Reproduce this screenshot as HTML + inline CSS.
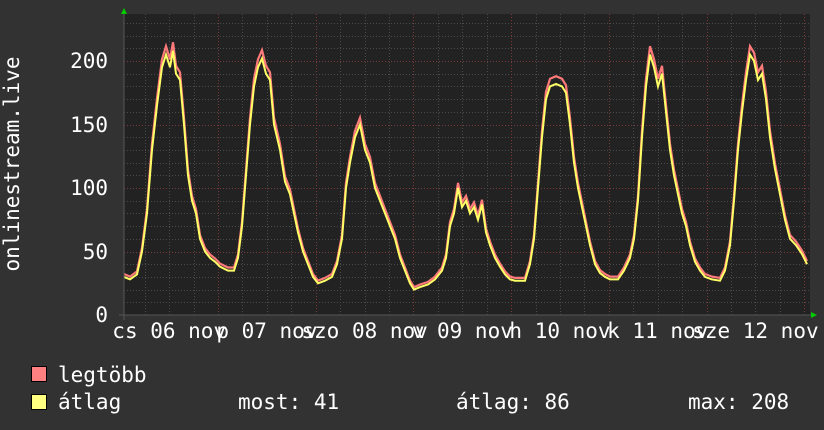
<!DOCTYPE html>
<html><head><meta charset="utf-8"><style>
html,body{margin:0;padding:0;background:#323232;}
svg{display:block}
text{font-family:"DejaVu Sans Mono","Liberation Mono",monospace;fill:#fff;font-size:21px}
</style></head><body>
<svg id="s" width="824" height="430" xmlns="http://www.w3.org/2000/svg">
<rect x="0" y="0" width="824" height="430" fill="#323232"/>
<rect x="124" y="14" width="686" height="301" fill="#222"/>
<g id="grid"></g>
<polyline id="red" fill="none" stroke="#ff7a7a" stroke-width="2.2"/>
<polyline id="yel" fill="none" stroke="#ffff66" stroke-width="2"/>
<line x1="124" y1="14" x2="124" y2="320" stroke="#555" stroke-width="1"/>
<line x1="119" y1="315" x2="812" y2="315" stroke="#555" stroke-width="1"/>
<polygon points="121,14 127,14 124,8" fill="#00cc00"/>
<polygon points="811,312 811,318 817,315" fill="#00cc00"/>
<g text-anchor="end">
<text x="108" y="322">0</text>
<text x="108" y="259">50</text>
<text x="108" y="195">100</text>
<text x="108" y="132">150</text>
<text x="108" y="68">200</text>
</g>
<text transform="translate(19,164) rotate(-90)" text-anchor="middle">onlinestream.live</text>
<g text-anchor="middle" id="xl"></g>
<rect x="31.5" y="366.5" width="15" height="15" fill="#ff8080" stroke="#000"/>
<rect x="31.5" y="394.5" width="15" height="15" fill="#ffff80" stroke="#000"/>
<text x="58" y="382">legtöbb</text>
<text x="58" y="409">átlag</text>
<text x="238" y="409">most: 41</text>
<text x="456" y="409">átlag: 86</text>
<text x="688" y="409">max: 208</text>
</svg>
<script>
var ns="http://www.w3.org/2000/svg",g=document.getElementById("grid");
function ln(x1,y1,x2,y2,c){var l=document.createElementNS(ns,"line");l.setAttribute("x1",x1);l.setAttribute("y1",y1);l.setAttribute("x2",x2);l.setAttribute("y2",y2);l.setAttribute("stroke",c);l.setAttribute("stroke-dasharray","1,2");l.setAttribute("stroke-width","1");g.appendChild(l);}
for(var v=10;v<=230;v+=10){var y=Math.round(315-v*1.27)+0.5;ln(124,y,810,y,v%50==0?"#7a3a3a":"#4a4a4a");}
for(var k=0;k<30;k++){var x=Math.round(120.3+k*24.43)+0.5;if(x<125||x>810)continue;ln(x,14,x,315,k%4==0?"#7a3a3a":"#4a4a4a");}
var d=[124,30,130,28,137,32,142,50,147,80,152,130,157,165,162,195,166,205,170,195,173,208,176,190,180,185,184,150,188,110,192,90,196,80,200,60,205,50,210,45,215,42,220,38,228,35,234,35,238,45,242,70,246,110,250,150,254,180,258,195,262,202,266,190,270,185,274,150,280,130,285,105,290,95,294,80,298,65,303,50,308,40,313,30,318,25,325,27,332,30,337,40,342,60,346,100,350,120,355,140,360,150,365,130,370,120,375,100,380,90,385,80,390,70,395,60,400,45,405,35,410,25,414,20,420,22,428,24,435,28,442,35,446,45,450,70,454,80,458,100,462,85,466,90,470,80,474,85,478,75,482,87,486,65,490,55,495,45,500,38,505,32,510,28,515,27,525,27,530,40,534,60,538,100,542,140,546,170,550,180,556,182,562,180,566,175,570,150,574,120,578,100,582,85,586,70,590,55,595,40,600,33,605,30,610,28,618,28,624,35,630,45,634,60,638,90,642,140,646,180,650,205,654,195,658,180,662,190,666,160,670,130,674,110,678,95,682,80,686,70,690,55,695,42,700,35,705,30,712,28,720,27,725,35,730,55,734,90,738,130,742,160,746,185,750,205,754,200,758,185,762,190,766,170,770,140,775,115,780,95,785,75,790,60,796,55,802,48,807,40];
var r="",yl="";
for(var i=0;i<d.length;i+=2){var x=d[i],v=d[i+1];yl+=x+","+(315-v*1.27).toFixed(1)+" ";r+=x+","+(315-(v*1.025+1.5)*1.27).toFixed(1)+" ";}
document.getElementById("red").setAttribute("points",r);
document.getElementById("yel").setAttribute("points",yl);
var labs=["cs 06 nov","p 07 nov","szo 08 nov","v 09 nov","h 10 nov","k 11 nov","sze 12 nov"],xl=document.getElementById("xl");
for(var j=0;j<7;j++){var t=document.createElementNS(ns,"text");t.setAttribute("x",(169.2+j*97.7).toFixed(1));t.setAttribute("y","338");t.textContent=labs[j];xl.appendChild(t);}
</script>
</body></html>
